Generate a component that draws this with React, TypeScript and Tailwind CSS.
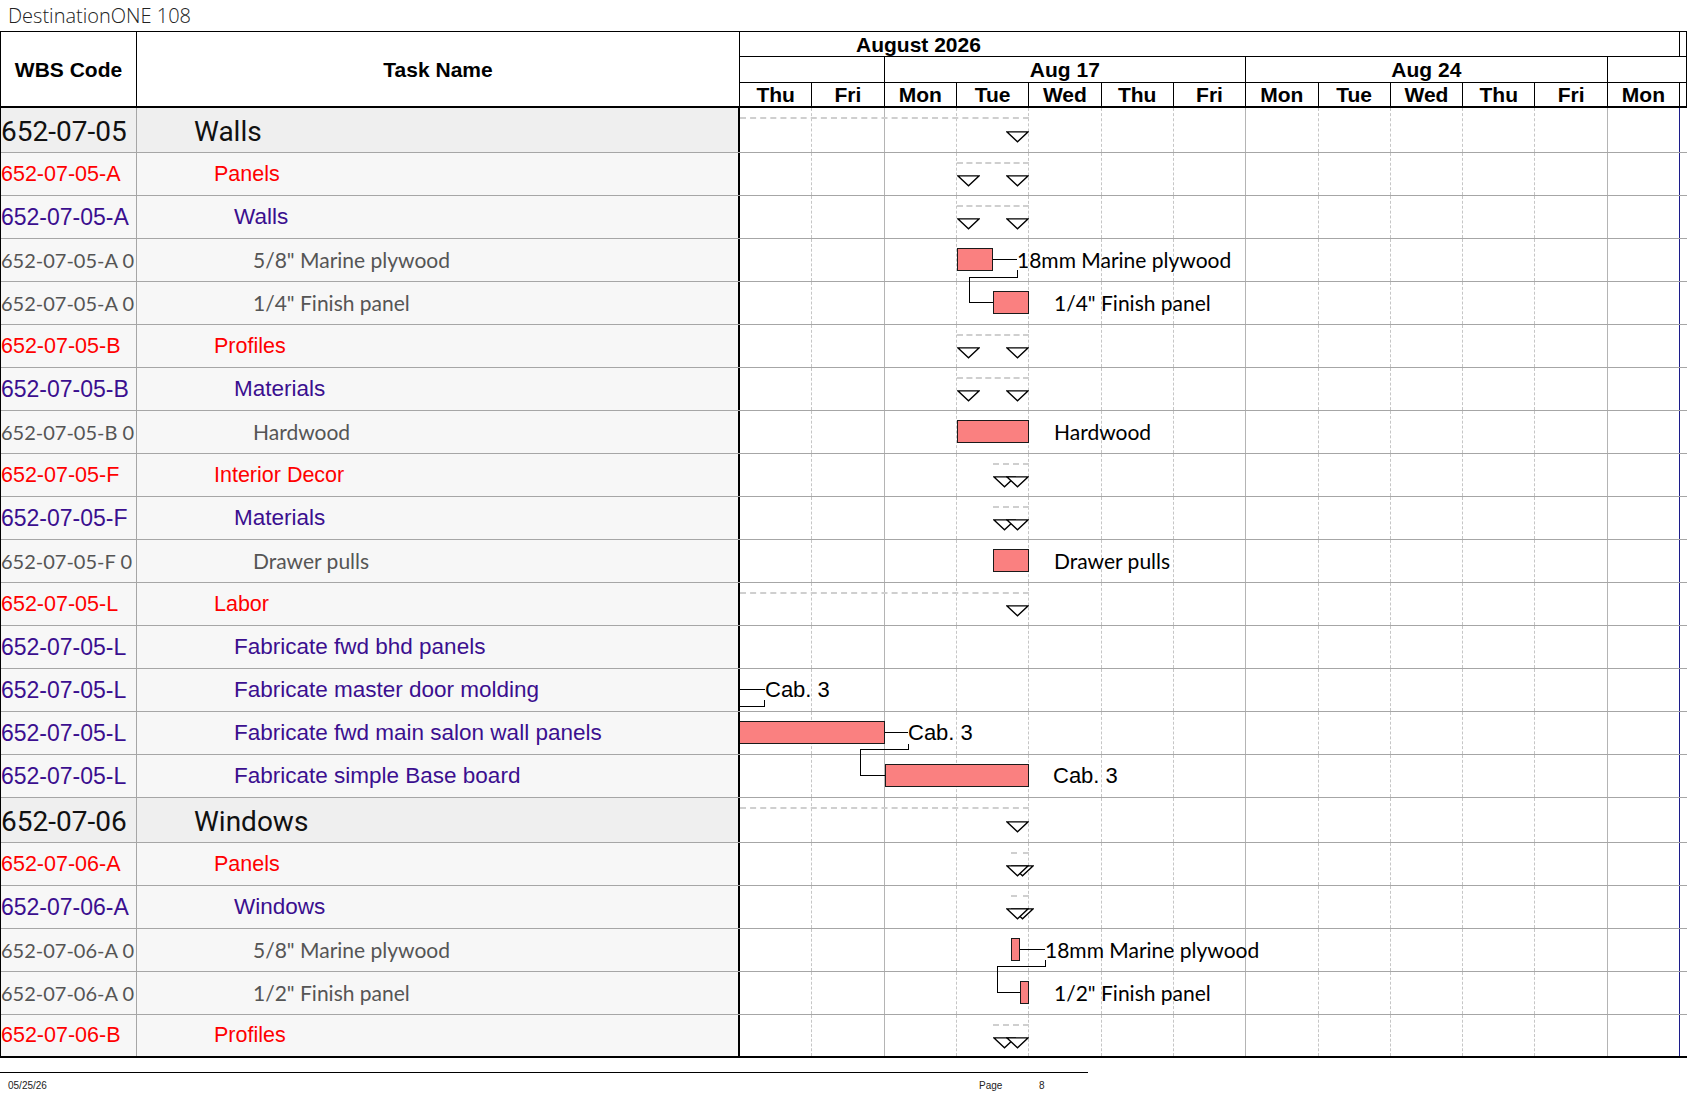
import React from "react";

// gantt geometry: 13 visible days over 940px
const DAY = 940 / 13;
const dx = (d: number) => d * DAY;

const days = ["Thu", "Fri", "Mon", "Tue", "Wed", "Thu", "Fri", "Mon", "Tue", "Wed", "Thu", "Fri", "Mon"];

type Kind = "sum" | "red" | "purple" | "leaf";

type Row = {
    wbs: string;
    name: string;
    kind: Kind;
    bar?: [number, number];
    span?: [number, number, boolean]; // from, to, start triangle visible
    label?: { text: string; left: number; arial?: boolean };
    lines?: string[];
};

const rows: Row[] = [
    { wbs: "652-07-05", name: "Walls", kind: "sum", span: [0, 4, false] },
    { wbs: "652-07-05-A", name: "Panels", kind: "red", span: [3, 4, true] },
    { wbs: "652-07-05-A", name: "Walls", kind: "purple", span: [3, 4, true] },
    {
        wbs: "652-07-05-A 0",
        name: '5/8" Marine plywood',
        kind: "leaf",
        bar: [3, 3.5],
        label: { text: "18mm Marine plywood", left: 277 },
        lines: [`M ${dx(3.5)} 20.5 H 277`, `M 277.5 31 V 38.5 H 229.5 V 63.5 H ${dx(3.5)}`],
    },
    {
        wbs: "652-07-05-A 0",
        name: '1/4" Finish panel',
        kind: "leaf",
        bar: [3.5, 4],
        label: { text: '1/4" Finish panel', left: 314 },
    },
    { wbs: "652-07-05-B", name: "Profiles", kind: "red", span: [3, 4, true] },
    { wbs: "652-07-05-B", name: "Materials", kind: "purple", span: [3, 4, true] },
    {
        wbs: "652-07-05-B 0",
        name: "Hardwood",
        kind: "leaf",
        bar: [3, 4],
        label: { text: "Hardwood", left: 314 },
    },
    { wbs: "652-07-05-F", name: "Interior Decor", kind: "red", span: [3.5, 4, true] },
    { wbs: "652-07-05-F", name: "Materials", kind: "purple", span: [3.5, 4, true] },
    {
        wbs: "652-07-05-F 0",
        name: "Drawer pulls",
        kind: "leaf",
        bar: [3.5, 4],
        label: { text: "Drawer pulls", left: 314 },
    },
    { wbs: "652-07-05-L", name: "Labor", kind: "red", span: [0, 4, false] },
    { wbs: "652-07-05-L", name: "Fabricate fwd bhd panels", kind: "purple" },
    {
        wbs: "652-07-05-L",
        name: "Fabricate master door molding",
        kind: "purple",
        label: { text: "Cab. 3", left: 25, arial: true },
        lines: ["M 0 20.5 H 25", "M 24.5 31 V 37.5 H 0"],
    },
    {
        wbs: "652-07-05-L",
        name: "Fabricate fwd main salon wall panels",
        kind: "purple",
        bar: [-0.5, 2],
        label: { text: "Cab. 3", left: 168, arial: true },
        lines: [`M ${dx(2)} 20.5 H 168`, `M 168.5 32 V 37.5 H 120.5 V 63.5 H ${dx(2)}`],
    },
    {
        wbs: "652-07-05-L",
        name: "Fabricate simple Base board",
        kind: "purple",
        bar: [2, 4],
        label: { text: "Cab. 3", left: 313, arial: true },
    },
    { wbs: "652-07-06", name: "Windows", kind: "sum", span: [0, 4, false] },
    { wbs: "652-07-06-A", name: "Panels", kind: "red", span: [3.75, 4, true] },
    { wbs: "652-07-06-A", name: "Windows", kind: "purple", span: [3.75, 4, true] },
    {
        wbs: "652-07-06-A 0",
        name: '5/8" Marine plywood',
        kind: "leaf",
        bar: [3.75, 3.875],
        label: { text: "18mm Marine plywood", left: 305 },
        lines: [`M ${dx(3.875)} 20.5 H 305`, `M 305.5 31 V 37.5 H 257.5 V 63.5 H ${dx(3.875)}`],
    },
    {
        wbs: "652-07-06-A 0",
        name: '1/2" Finish panel',
        kind: "leaf",
        bar: [3.875, 4],
        label: { text: '1/2" Finish panel', left: 314 },
    },
    { wbs: "652-07-06-B", name: "Profiles", kind: "red", span: [3.5, 4, true] },
];

const kindStyle: Record<Kind, { wbs: string; name: string; bg: string; indent: string }> = {
    sum: {
        wbs: "font-['Roboto',sans-serif] text-[28px] text-[#111] pt-[4px]",
        name: "font-['Roboto',sans-serif] text-[28px] text-[#111] pt-[4px]",
        bg: "bg-[#efefef]",
        indent: "pl-[57px]",
    },
    red: {
        wbs: "font-['Liberation_Sans',Arial,sans-serif] text-[21.5px] text-[#ff0000]",
        name: "font-['Liberation_Sans',Arial,sans-serif] text-[21.5px] text-[#ff0000]",
        bg: "bg-[#f7f7f7]",
        indent: "pl-[77px]",
    },
    purple: {
        wbs: "font-['Liberation_Sans',Arial,sans-serif] text-[23px] text-[#3b0f8f]",
        name: "font-['Liberation_Sans',Arial,sans-serif] text-[22.5px] text-[#3b0f8f]",
        bg: "bg-[#f7f7f7]",
        indent: "pl-[97px]",
    },
    leaf: {
        wbs: "font-['Lato',sans-serif] text-[20px] text-[#555]",
        name: "font-['Lato',sans-serif] text-[21px] text-[#555]",
        bg: "bg-[#f7f7f7]",
        indent: "pl-[116px]",
    },
};

const Triangle = ({ left, top }: { left: number; top: number }) => (
    <svg
        className="absolute"
        style={{ left, top }}
        width="23"
        height="12"
        viewBox="0 0 23 12"
    >
        <polygon points="0.8,0.8 22.2,0.8 11.5,10.8" fill="white" stroke="black" strokeWidth="1.3" />
    </svg>
);

const GanttCell = ({ row }: { row: Row }) => {
    const sum = row.kind === "sum";
    return (
        <div className="relative flex w-[940px] shrink-0">
            {days.map((_, i) => (
                <div
                    key={i}
                    className={
                        i === 12
                            ? "flex-1 border-r border-[#1c1c8a]"
                            : i === 1 || i === 6 || i === 11
                              ? "flex-1 border-r border-[#b4b4b4]"
                              : "flex-1 border-r border-dashed border-[#c6c6c6]"
                    }
                />
            ))}

            {row.span && (
                <>
                    <div
                        className="absolute top-[9px] h-0 border-t-2 border-dashed border-[#cfcfcf]"
                        style={{ left: dx(row.span[0]), width: dx(row.span[1]) - dx(row.span[0]) }}
                    />
                    {row.span[2] && <Triangle left={dx(row.span[0])} top={sum ? 23 : 22} />}
                    <Triangle left={dx(row.span[1]) - 23} top={sum ? 23 : 22} />
                </>
            )}

            {row.bar && (
                <div
                    className={`absolute top-[9px] h-[23px] bg-[#fa8080] border-y border-r border-[#1a1a1a] ${
                        row.bar[0] >= 0 ? "border-l" : ""
                    }`}
                    style={{
                        left: Math.max(0, dx(row.bar[0])),
                        width: dx(row.bar[1]) - Math.max(0, dx(row.bar[0])),
                    }}
                />
            )}

            {row.lines && (
                <svg
                    className="absolute left-0 top-0 overflow-visible pointer-events-none z-10"
                    width="940"
                    height="43"
                >
                    {row.lines.map((d, i) => (
                        <path key={i} d={d} fill="none" stroke="black" strokeWidth="1" shapeRendering="crispEdges" />
                    ))}
                </svg>
            )}

            {row.label && (
                <span
                    className={`absolute top-[9px] h-[23px] leading-[23px] whitespace-nowrap text-black ${
                        row.label.arial
                            ? "font-['Liberation_Sans',Arial,sans-serif] text-[22px]"
                            : "font-['Lato',sans-serif] text-[21px]"
                    }`}
                    style={{ left: row.label.left }}
                >
                    {row.label.text}
                </span>
            )}
        </div>
    );
};

const App = () => {
    return (
        <div className="w-[1687px] h-[1097px] bg-white overflow-hidden text-black">
            <div className="h-[31px] pl-[8px] flex items-center font-['Open_Sans',sans-serif] font-light text-[20px] text-[#222]">
                DestinationONE 108
            </div>

            {/* header */}
            <div className="flex h-[77px] border-t border-b-2 border-l border-r border-black font-['Liberation_Sans',Arial,sans-serif] font-bold text-[21px] leading-none">
                <div className="w-[136px] shrink-0 border-r border-black flex items-center justify-center">
                    WBS Code
                </div>
                <div className="w-[603px] shrink-0 border-r border-black flex items-center justify-center">
                    Task Name
                </div>
                <div className="flex-1 flex flex-col">
                    <div className="h-[25px] flex border-b border-black">
                        <div className="w-[940px] border-r border-black pl-[116px] flex items-center">
                            August 2026
                        </div>
                    </div>
                    <div className="h-[26px] flex border-b border-black">
                        <div className="w-[144.6px] shrink-0 border-r border-black" />
                        <div className="w-[361.5px] shrink-0 border-r border-black flex items-center justify-center">
                            Aug 17
                        </div>
                        <div className="w-[361.5px] shrink-0 border-r border-black flex items-center justify-center">
                            Aug 24
                        </div>
                        <div className="flex-1" />
                    </div>
                    <div className="flex-1 flex">
                        <div className="w-[940px] flex">
                            {days.map((d, i) => (
                                <div key={i} className="flex-1 border-r border-black flex items-center justify-center">
                                    {d}
                                </div>
                            ))}
                        </div>
                    </div>
                </div>
            </div>

            {/* body */}
            <div className="border-l border-black">
                {rows.map((row, i) => {
                    const s = kindStyle[row.kind];
                    const last = i === rows.length - 1;
                    return (
                        <div
                            key={i}
                            className={`flex ${row.kind === "sum" ? "h-[45px]" : "h-[43px]"} ${
                                last ? "border-b-2 border-black" : "border-b border-[#a6a6a6]"
                            }`}
                        >
                            <div
                                className={`w-[136px] shrink-0 border-r border-[#a6a6a6] overflow-hidden whitespace-nowrap flex items-center ${s.bg} ${s.wbs}`}
                            >
                                {row.wbs}
                            </div>
                            <div
                                className={`w-[603px] shrink-0 border-r-2 border-black flex items-center whitespace-nowrap ${s.bg} ${s.indent} ${s.name}`}
                            >
                                {row.name}
                            </div>
                            <GanttCell row={row} />
                        </div>
                    );
                })}
            </div>

            {/* footer */}
            <div className="mt-[14px] w-[1088px] border-t border-black" />
            <div className="flex pl-[8px] pt-[5px] font-['Liberation_Sans',Arial,sans-serif] text-[10px] text-[#222]">
                <span className="w-[971px]">05/25/26</span>
                <span className="w-[60px]">Page</span>
                <span>8</span>
            </div>
        </div>
    );
};

export default App;
